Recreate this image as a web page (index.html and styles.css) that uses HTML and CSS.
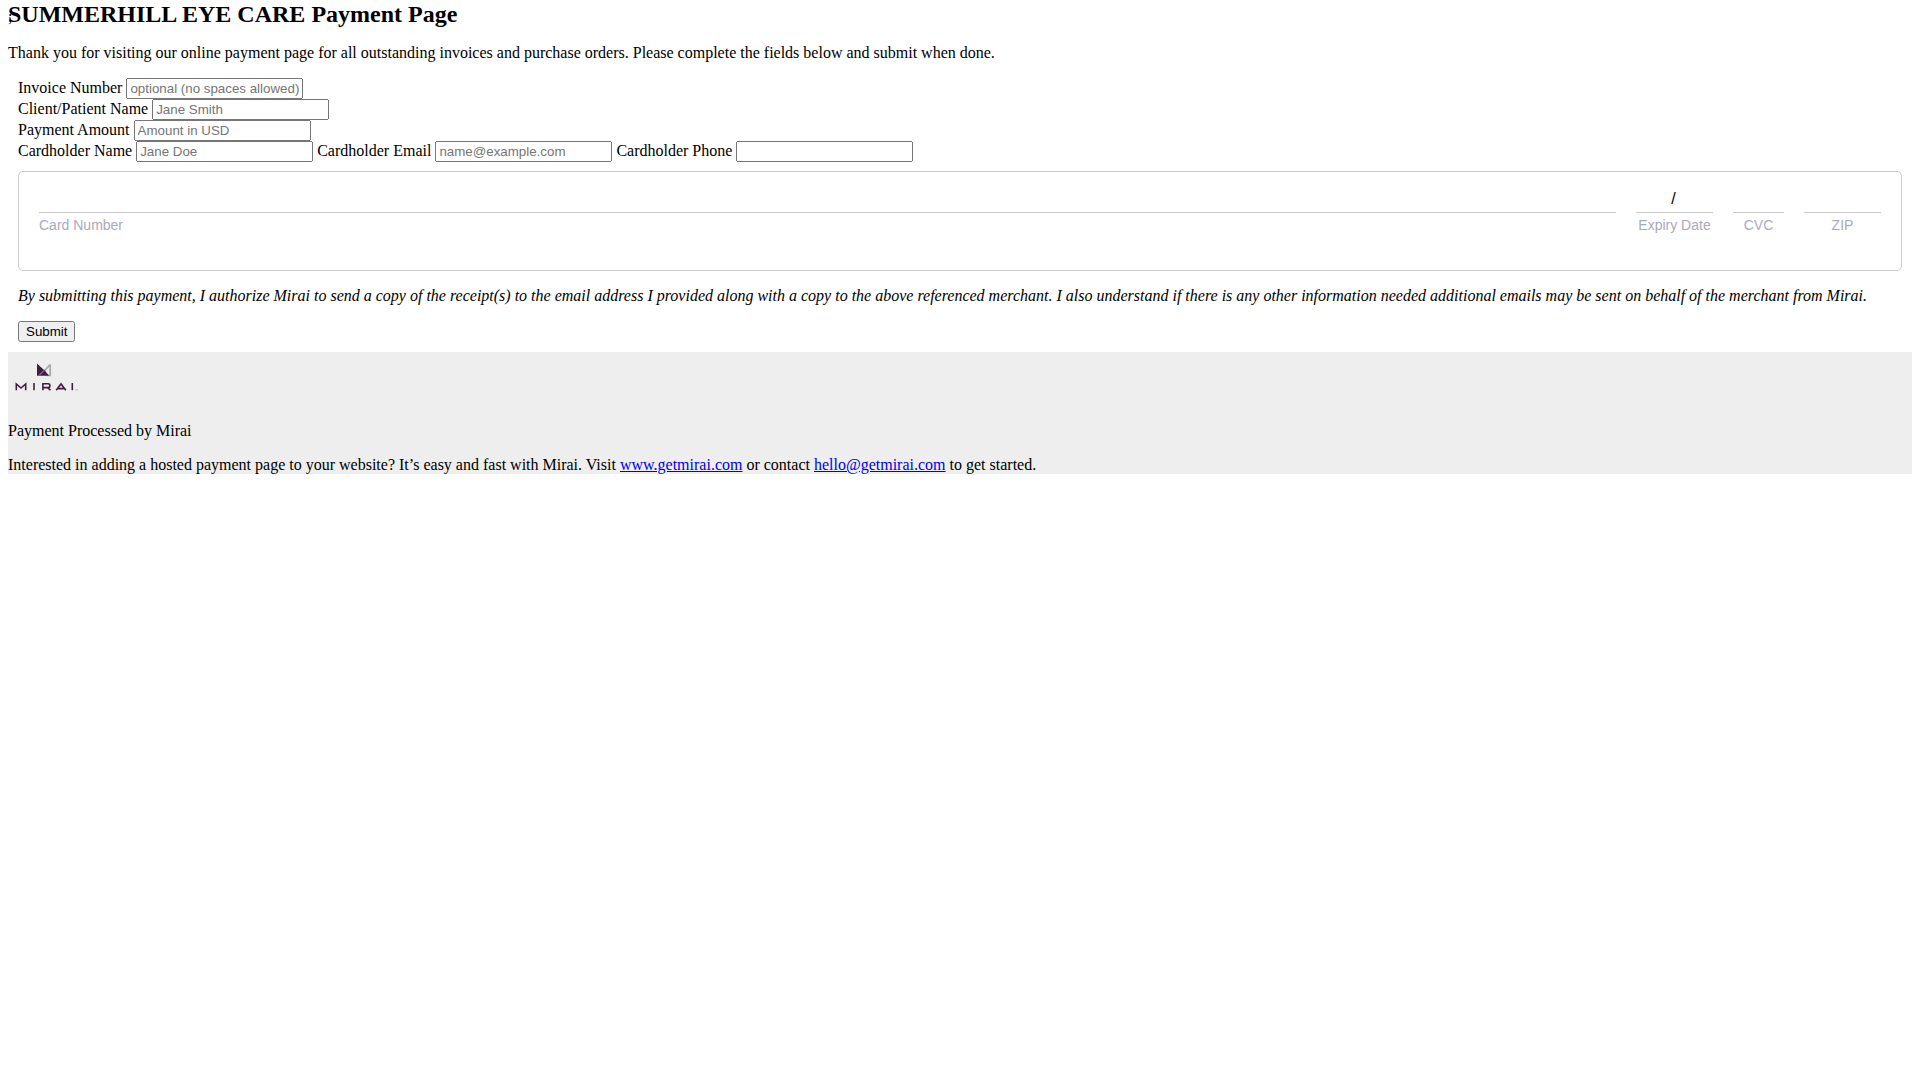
FILE: index.html
```
<!DOCTYPE html>
<html lang="en">
<head>
    <meta charset="utf-8">
    <title>SUMMERHILL EYE CARE Payment Page</title>
    <link rel="stylesheet" href="styles.css">
</head>
<body>
    <span class="stray">;</span>
    <h2>SUMMERHILL EYE CARE Payment Page</h2>
    <p>Thank you for visiting our online payment page for all outstanding invoices and purchase orders. Please complete the fields below and submit when done.</p>

    <form class="payment-form" action="#" method="post">
        <div class="row">
            <label for="invoice">Invoice Number</label>
            <input type="text" id="invoice" name="invoice" placeholder="optional (no spaces allowed)">
        </div>
        <div class="row">
            <label for="client">Client/Patient Name</label>
            <input type="text" id="client" name="client" placeholder="Jane Smith">
        </div>
        <div class="row">
            <label for="amount">Payment Amount</label>
            <input type="text" id="amount" name="amount" placeholder="Amount in USD">
        </div>
        <div class="row">
            <label for="name">Cardholder Name</label>
            <input type="text" id="name" name="name" placeholder="Jane Doe">
            <label for="email">Cardholder Email</label>
            <input type="email" id="email" name="email" placeholder="name@example.com">
            <label for="phone">Cardholder Phone</label>
            <input type="tel" id="phone" name="phone">
        </div>

        <div class="card">
            <div class="card-field number">
                <input type="text" id="card-number" name="card_number">
                <label for="card-number">Card Number</label>
            </div>
            <div class="card-field expiry">
                <input type="text" id="expiry" name="expiry" value="/">
                <label for="expiry">Expiry Date</label>
            </div>
            <div class="card-field cvc">
                <input type="text" id="cvc" name="cvc">
                <label for="cvc">CVC</label>
            </div>
            <div class="card-field zip">
                <input type="text" id="zip" name="zip">
                <label for="zip">ZIP</label>
            </div>
        </div>

        <p class="terms">By submitting this payment, I authorize Mirai to send a copy of the receipt(s) to the email address I provided along with a copy to the above referenced merchant. I also understand if there is any other information needed additional emails may be sent on behalf of the merchant from Mirai.</p>
        <button type="submit">Submit</button>
    </form>

    <footer class="footer">
        <svg class="logo" viewBox="0 0 75 50" role="img" aria-label="Mirai">
            <path fill="none" stroke="#aaa" stroke-width="1.8" d="M42.200 12.500v10.800h-4M42.200 12.500L35 20.500"/>
            <path fill="#431c43" d="M29 11.500L36 18l-5 5.800h-2z"/>
            <path fill="#431c43" d="M36 17.500l5 6.300H30.500z"/>
            <path fill="none" stroke="#bbb" stroke-width=".8" d="M36 18.500l-5 5"/>
            <g fill="none" stroke="#431c43" stroke-width="1.600">
                <path d="M8.300 38.200V32l4.700 4 4.700-4v6.200"/>
                <path d="M26 31v7.200"/>
                <path d="M34.900 38.200v-6.400h5.300q1.700 0 1.700 1.900t-1.700 1.900h-5.300M39.500 35.600l3 2.600"/>
                <path d="M48.200 38.200l4.800-6.300 4.800 6.300M50.200 36.600h5.600"/>
                <path d="M64.300 31v7.200"/>
            </g>
            <path stroke="#bbb" d="M67 37.800h3"/>
        </svg>
        <p>Payment Processed by Mirai</p>
        <p>Interested in adding a hosted payment page to your website? It’s easy and fast with Mirai. Visit <a href="#">www.getmirai.com</a> or contact <a href="#">hello@getmirai.com</a> to get started.</p>
    </footer>
</body>
</html>
```
FILE: styles.css
```
body {
    margin: 0 8px 8px;
    padding-top: 1px;
    font-family: "Liberation Serif", "Times New Roman", serif;
    font-size: 16px;
}
.stray {
    position: absolute;
    top: 8px;
}
h2 {
    margin: 0;
    font-size: 24px;
}
p {
    margin: 16px 0;
}
.payment-form {
    padding: 0 10px 10px;
}
.row input, button {
    font-family: "Liberation Sans", Arial, sans-serif;
}
.row input {
    box-sizing: border-box;
    width: 177px;
}
.card {
    display: flex;
    gap: 20px;
    box-sizing: border-box;
    min-height: 100px;
    margin: 9px 0 16px;
    padding: 10px 20px;
    border: 1px solid #ccc;
    border-radius: 5px;
    font-family: "Liberation Sans", Arial, sans-serif;
}
.card-field {
    display: flex;
    flex-direction: column;
    text-align: center;
}
.card-field input {
    box-sizing: border-box;
    width: 100%;
    height: 31px;
    padding: 4px 2px 0 0;
    border: none;
    border-bottom: 1px solid #ccc;
    outline: none;
    background: none;
    font: inherit;
    text-align: center;
}
.card-field label {
    margin-top: 4px;
    color: #aab;
    font-size: 14px;
}
.number {
    flex: 1;
    text-align: left;
}
.number input {
    text-align: left;
}
.expiry, .zip {
    width: 77px;
}
.cvc {
    width: 51px;
}
.terms {
    font-style: italic;
}
.footer {
    background: #eee;
}
.logo {
    width: 75px;
    height: 50px;
}
.footer p:last-child {
    margin-bottom: 0;
}
```
